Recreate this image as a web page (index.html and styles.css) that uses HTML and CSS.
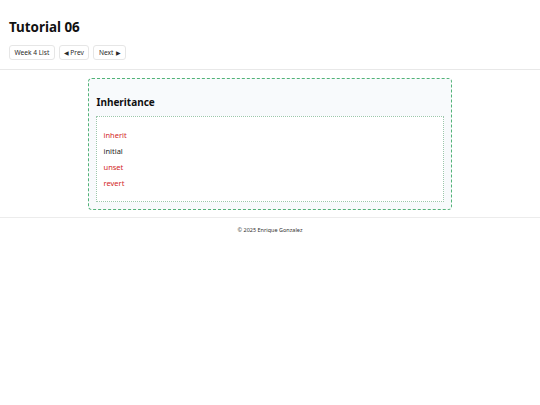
FILE: index.html
```html
<!DOCTYPE html>
<html lang="en">
<head>
<meta charset="utf-8">
<title>Tutorial 06</title>
<link rel="stylesheet" href="styles.css">
</head>
<body>
<header class="site-header">
  <h1 class="title">Tutorial 06</h1>
  <nav class="nav">
    <a class="btn" href="#">Week 4 List</a>
    <a class="btn" href="#"><span class="tri">◀</span>Prev</a>
    <a class="btn" href="#">Next<span class="tri tri-r">▶</span></a>
  </nav>
</header>
<main class="main">
  <section class="card">
    <h2 class="card-title">Inheritance</h2>
    <div class="demo">
      <p class="item red">inherit</p>
      <p class="item">initial</p>
      <p class="item red">unset</p>
      <p class="item red">revert</p>
    </div>
  </section>
</main>
<footer class="site-footer">© 2025 Enrique Gonzalez</footer>
</body>
</html>
```
FILE: styles.css
```css
* { box-sizing: border-box; }
html, body { margin: 0; padding: 0; background: #fff; }
body {
  font-family: "Noto Sans", "Open Sans", sans-serif;
  color: #111;
}
.site-header {
  padding: 18px 9px 9px;
  border-bottom: 1px solid #e8e8e8;
}
.title {
  margin: 0 0 9px;
  font-size: 13.4px;
  line-height: 18px;
  font-weight: 700;
}
.nav {
  display: flex;
  gap: 4px;
}
.btn {
  display: inline-flex;
  align-items: center;
  height: 15px;
  padding: 0 4.5px;
  font-size: 6.6px;
  color: #2a2a2a;
  text-decoration: none;
  border: 1px solid #e6e6e6;
  border-radius: 3px;
  background: #fff;
}
.tri {
  font-size: 5.5px;
  margin-right: 1px;
}
.tri-r {
  margin-right: 0;
  margin-left: 2.5px;
}
.main {
  padding: 8px 0 7px;
  display: flex;
  justify-content: center;
  border-bottom: 1px solid #ececec;
}
.card {
  width: 364px;
  margin-left: -1px;
  border: 1px dashed #52b378;
  border-radius: 4px;
  background: #f8fafc;
  padding: 7px;
}
.card-title {
  margin: 10px 0 8px;
  padding-left: 1px;
  font-size: 10px;
  line-height: 12px;
  font-weight: 700;
}
.demo {
  border: 1px dotted #9cc7ac;
  background: #fff;
  padding: 10px 7px;
}
.item {
  margin: 0;
  font-size: 7.5px;
  line-height: 16px;
  color: #222;
}
.item.red { color: #d32626; }
.site-footer {
  text-align: center;
  font-size: 5.5px;
  color: #333;
  padding: 8px 0;
}
```
